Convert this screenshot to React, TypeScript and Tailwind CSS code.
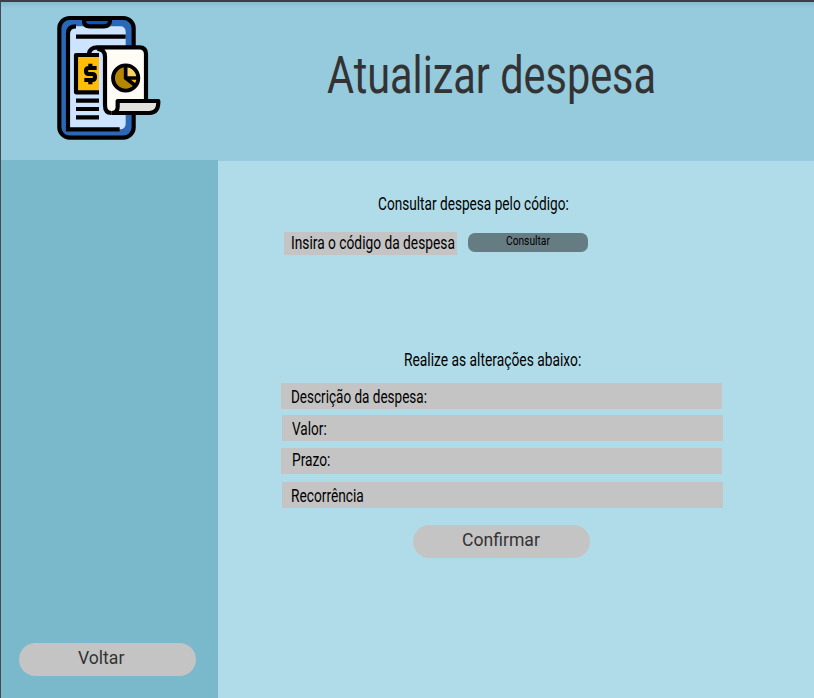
import { useLayoutEffect, useRef, useState } from "react";
import { clsx } from "clsx";

type LabelProps = { text: string; width: number; className?: string };

/* Condensed text: squeezes its glyphs horizontally to the given width. */
function Condensed({ text, width, className }: LabelProps) {
  const ref = useRef<HTMLSpanElement>(null);
  const [scale, setScale] = useState(1);
  useLayoutEffect(() => {
    if (ref.current) setScale(width / ref.current.offsetWidth);
  }, [text, width]);
  return (
    <span className={clsx("block whitespace-nowrap", className)} style={{ width }}>
      <span ref={ref} className="inline-block origin-left" style={{ transform: `scaleX(${scale})` }}>
        {text}
      </span>
    </span>
  );
}

function Logo() {
  return (
    <svg viewBox="0 6 420 444" className="ml-[39px] h-[148px] w-[140px] shrink-0" fill="none" stroke="#000" strokeWidth="12.5">
      <rect x="58" y="54" width="223" height="359" rx="31" fill="#2b68b8" />
      <path d="M108 79H240Q257 79 257 96V370Q257 388 240 388H84V100Q84 79 108 79Z" fill="#cce4ff" stroke="none" />
      <path d="M132 57V64Q133 79 149 79H192Q208 79 210 64V57Z" fill="#0b55bb" />
      <path d="M108 79Q84 79 84 101V388H239" />
      <path d="M108 110H257M108 302H177M108 327H177M108 352H177" />
      <path d="M177 165H108V277H177" fill="#ffbd08" strokeLinejoin="round" />
      <path d="M170 204H146Q138 204 138 213Q138 222 146 222H157Q165 222 165 231Q165 240 157 240H133M151 191V204M151 240V253" strokeWidth="12.5" />
      <path d="M177 164H188Q184 147 172 147L196 144V310L190 315H177Z" fill="#cce4ff" stroke="none" />
      <path d="M172 142H298Q318 142 318 162V303H233V322Q231 339 214 339Q196 339 196 316V166Q194 148 172 142Z" fill="#fffcf5" stroke="none" />
      <path d="M147 160Q151 142 172 142H298Q318 142 318 162V303M172 147Q195 148 195 170V316Q195 339 214 339" />
      <path d="M214 339Q233 339 233 320V303H355Q356 339 328 339H214" fill="#e4e2dd" strokeLinejoin="round" />
      <circle cx="257" cy="234" r="38" fill="#b68600" stroke="none" />
      <path d="M257 234V196A38 38 0 0 1 295 234Z" fill="#ffd260" stroke="none" />
      <path d="M257 234H295A38 38 0 0 1 284 261Z" fill="#ffbd08" stroke="none" />
      <path d="M257 198V234L284 255M257 234H294" strokeWidth="11" />
      <circle cx="257" cy="234" r="38" strokeWidth="11.5" />
    </svg>
  );
}

const fields = [
  { text: "Descrição da despesa:", width: 136, box: "ml-[63px]", label: "ml-[10px] pt-[2px]" },
  { text: "Valor:", width: 35, box: "ml-[64px] mt-[6px]", label: "ml-[10px] pt-[2px]" },
  { text: "Prazo:", width: 38.5, box: "ml-[63px] mt-[7px]", label: "ml-[11px] pb-[2px]" },
  { text: "Recorrência", width: 73, box: "ml-[64px] mt-[8px]", label: "ml-[9px] pt-[2px]" },
];

export default function App() {
  return (
    <div className="flex h-[698px] w-[814px] flex-col overflow-hidden border-l border-t-2 border-l-[#444b50] border-t-[#3c3e40] bg-[#b0dce9] font-[Roboto,sans-serif] text-black">
      <header className="flex h-[158px] shrink-0 bg-[#96cadd] bg-linear-to-b from-[#89b9cc] to-[#96cadd] to-[6px]">
        <Logo />
        <h1 className="ml-[147px] mt-[44px] text-[51px] leading-[60px] text-[#333]">
          <Condensed text="Atualizar despesa" width={329} />
        </h1>
      </header>
      <div className="flex h-[538px]">
        <aside className="flex w-[217px] shrink-0 flex-col justify-end bg-[#79b9cb] pb-[22px] pl-[18px]">
          <button className="h-[33px] w-[177px] rounded-full bg-[#c4c4c4] pb-[2px] pl-[59px] text-left text-[17.6px] leading-[31px] text-[#333]">
            Voltar
          </button>
        </aside>
        <main className="flex-1 border-t border-t-[#96cadd] text-[17.5px] leading-[24px]">
          <Condensed text="Consultar despesa pelo código:" width={191} className="ml-[160px] mt-[31px]" />
          <div className="mt-[16px] flex">
            <div className="ml-[66px] h-[23px] w-[173px] bg-[#c4c4c4] pl-[7px] leading-[23px]">
              <Condensed text="Insira o código da despesa" width={163.5} />
            </div>
            <button className="ml-[10.5px] mt-px h-[19px] w-[120px] rounded-[7px] bg-[#667c83] pb-[3px] pl-[38px] text-left text-[13px] leading-[16px]">
              <Condensed text="Consultar" width={44} />
            </button>
          </div>
          <Condensed text="Realize as alterações abaixo:" width={177.5} className="ml-[186px] mt-[93px]" />
          <div className="mt-[11px]">
            {fields.map((f) => (
              <div key={f.text} className={clsx("flex h-[26px] w-[441px] items-center bg-[#c4c4c4]", f.box)}>
                <Condensed text={f.text} width={f.width} className={f.label} />
              </div>
            ))}
          </div>
          <button className="ml-[195px] mt-[17px] block h-[33px] w-[177px] rounded-full bg-[#c4c4c4] pb-[3px] pl-[49px] text-left text-[17.6px] leading-[30px] text-[#333]">
            Confirmar
          </button>
        </main>
      </div>
    </div>
  );
}
